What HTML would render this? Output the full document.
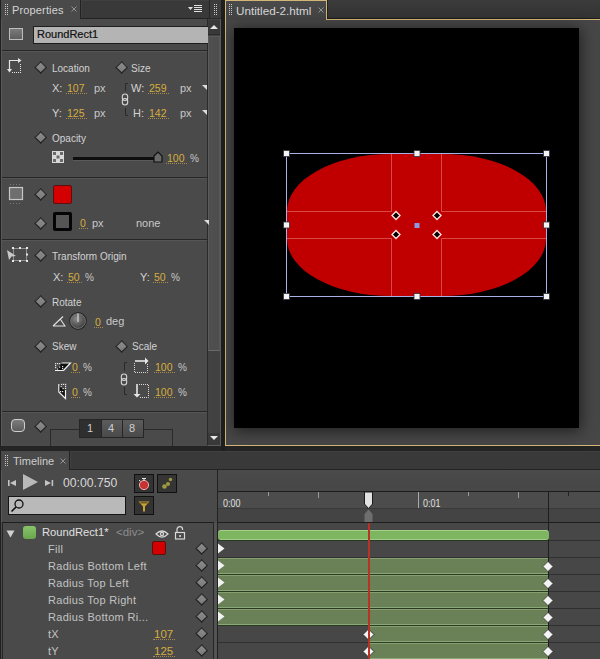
<!DOCTYPE html>
<html><head><meta charset="utf-8">
<style>
*{margin:0;padding:0;box-sizing:border-box}
html,body{width:600px;height:659px;overflow:hidden;background:#242424;font-family:"Liberation Sans",sans-serif}
.a{position:absolute}
.t{position:absolute;white-space:nowrap;color:#d2d2d2;font-size:10px;line-height:10px}
.u{position:absolute;white-space:nowrap;color:#c8c8c8;font-size:11px;line-height:10px}
.v{position:absolute;white-space:nowrap;color:#d6ad3e;font-size:10.5px;line-height:10px}
.v::after{content:"";position:absolute;left:-1px;right:-2px;bottom:-1px;border-bottom:1px dotted #a88a4a}
.dm{position:absolute;width:9.4px;height:9.4px;transform:rotate(45deg);background:linear-gradient(135deg,#8c8c8c,#7a7a7a);border:1px solid #2e2e2e;border-right-color:#1e1e1e;border-bottom-color:#1e1e1e}
.sep{position:absolute;left:2px;width:205px;height:2px;border-top:1px solid #262626;border-bottom:1px solid #555}
.tri{position:absolute;width:0;height:0;border-left:4px solid transparent;border-top:5px solid #ddd}
</style></head><body>
<!-- ================= PROPERTIES PANEL ================= -->
<div class="a" style="left:0;top:0;width:221px;height:446px;background:#4a4a4a;border-left:1px solid #202020"></div>
<div class="a" style="left:1px;top:19px;width:1px;height:427px;background:#585858"></div>
<div class="a" style="left:80px;top:0;width:129px;height:19px;background:#393939;border-left:1px solid #232323;border-bottom:1px solid #232323;box-shadow:inset 1px 1px 0 #404040"></div>
<div class="a" style="left:209px;top:0;width:12px;height:19px;background:#3c3c3c;border-left:1px solid #262626;border-bottom:1px solid #2a2a2a"></div>
<!-- grippers -->
<svg class="a" style="left:5px;top:3px" width="5" height="13"><g fill="#c8c8c8"><rect x="0" y="1" width="1" height="1"/><rect x="2" y="1" width="1" height="1"/><rect x="0" y="3" width="1" height="1"/><rect x="2" y="3" width="1" height="1"/><rect x="0" y="5" width="1" height="1"/><rect x="2" y="5" width="1" height="1"/><rect x="0" y="7" width="1" height="1"/><rect x="2" y="7" width="1" height="1"/><rect x="0" y="9" width="1" height="1"/><rect x="2" y="9" width="1" height="1"/><rect x="0" y="11" width="1" height="1"/><rect x="2" y="11" width="1" height="1"/></g></svg>
<svg class="a" style="left:214px;top:3px" width="5" height="13"><g fill="#c8c8c8"><rect x="0" y="1" width="1" height="1"/><rect x="2" y="1" width="1" height="1"/><rect x="0" y="3" width="1" height="1"/><rect x="2" y="3" width="1" height="1"/><rect x="0" y="5" width="1" height="1"/><rect x="2" y="5" width="1" height="1"/><rect x="0" y="7" width="1" height="1"/><rect x="2" y="7" width="1" height="1"/><rect x="0" y="9" width="1" height="1"/><rect x="2" y="9" width="1" height="1"/><rect x="0" y="11" width="1" height="1"/><rect x="2" y="11" width="1" height="1"/></g></svg>
<div class="t" style="left:12px;top:5px;font-size:11px;line-height:11px;color:#d4d4d4;letter-spacing:0.15px">Properties</div>
<svg class="a" style="left:71px;top:6px" width="6" height="6"><path d="M0.5 0.5L5.5 5.5M5.5 0.5L0.5 5.5" stroke="#9a9a9a" stroke-width="0.9"/></svg>
<!-- menu icon -->
<svg class="a" style="left:187px;top:3px" width="17" height="12"><path d="M1 4h5l-2.5 3z" fill="#e0e0e0"/><g fill="#e0e0e0"><rect x="7" y="2" width="8" height="1"/><rect x="7" y="4" width="8" height="1"/><rect x="7" y="6" width="8" height="1"/><rect x="7" y="8" width="8" height="1"/></g></svg>

<!-- scrollbar -->
<div class="a" style="left:207px;top:19px;width:14px;height:427px;background:#424242;border-left:1px solid #2a2a2a;border-right:1px solid #5c5c5c;border-bottom:1px solid #5c5c5c"></div>
<div class="a" style="left:208px;top:20px;width:12px;height:15px;background:#393939;border-bottom:1px solid #2c2c2c"></div>
<svg class="a" style="left:210px;top:24px" width="8" height="6"><path d="M0 5L4 1L8 5z" fill="#e6e6e6"/></svg>
<div class="a" style="left:208px;top:36px;width:12px;height:315px;background:#4f4f4f;border:1px solid #5a5a5a;border-bottom:1px solid #6a6a6a"></div>
<div class="a" style="left:208px;top:433px;width:12px;height:12px;background:#393939"></div>
<svg class="a" style="left:210px;top:435px" width="8" height="6"><path d="M0 1L8 1L4 5z" fill="#e6e6e6"/></svg>

<!-- name row -->
<div class="a" style="left:9px;top:28px;width:14px;height:12px;border:1px solid #bdbdbd;background:linear-gradient(#7a7a7a,#5e5e5e)"></div>
<div class="a" style="left:33px;top:26px;width:175px;height:18px;background:#b4b4b4;border:1px solid #1e1e1e;border-right:none"></div>
<div class="t" style="left:37px;top:29px;font-size:11px;line-height:11px;color:#101010;-webkit-text-stroke:0.2px #101010">RoundRect1</div>
<div class="sep" style="top:50px"></div>

<!-- location / size -->
<svg class="a" style="left:6px;top:57px" width="17" height="17">
 <path d="M3.5 14V3.5H14" stroke="#e4e4e4" stroke-width="1.2" fill="none"/>
 <path d="M12 1L15.5 3.5L12 6z" fill="#e4e4e4"/>
 <path d="M1 12L3.5 15.5L6 12z" fill="#e4e4e4"/>
 <g fill="#e4e4e4"><rect x="14" y="7" width="1" height="1"/><rect x="14" y="9" width="1" height="1"/><rect x="14" y="11" width="1" height="1"/><rect x="14" y="13" width="1" height="1"/><rect x="14" y="15" width="1" height="1"/><rect x="6" y="15" width="1" height="1"/><rect x="8" y="15" width="1" height="1"/><rect x="10" y="15" width="1" height="1"/><rect x="12" y="15" width="1" height="1"/></g>
</svg>
<div class="dm" style="left:36px;top:63px"></div>
<div class="t" style="left:52px;top:64px">Location</div>
<div class="dm" style="left:117px;top:63px"></div>
<div class="t" style="left:131px;top:64px">Size</div>

<div class="t" style="left:52px;top:83px;font-size:11px">X:</div>
<div class="v" style="left:67px;top:83px">107</div>
<div class="u" style="left:94px;top:83px">px</div>
<div class="t" style="left:52px;top:108px;font-size:11px">Y:</div>
<div class="v" style="left:67px;top:108px">125</div>
<div class="u" style="left:94px;top:108px">px</div>

<svg class="a" style="left:120px;top:82px" width="10" height="36">
 <path d="M5.5 9V1.5H8" stroke="#2a2a2a" stroke-width="1" fill="none"/>
 <path d="M5.5 26V33.5H8" stroke="#2a2a2a" stroke-width="1" fill="none"/>
 <rect x="2.3" y="12" width="5.4" height="6.5" rx="2.7" stroke="#d4d4d4" stroke-width="1.1" fill="none"/>
 <rect x="2.3" y="16.5" width="5.4" height="6.5" rx="2.7" stroke="#d4d4d4" stroke-width="1.1" fill="none"/>
</svg>
<div class="t" style="left:131px;top:83px;font-size:11px">W:</div>
<div class="v" style="left:149px;top:83px">259</div>
<div class="u" style="left:180px;top:83px">px</div>
<svg class="a" style="left:202px;top:85px" width="6" height="6"><path d="M0 0H5V5z" fill="#dcdcdc"/></svg>
<div class="t" style="left:133px;top:108px;font-size:11px">H:</div>
<div class="v" style="left:149px;top:108px">142</div>
<div class="u" style="left:180px;top:108px">px</div>
<svg class="a" style="left:202px;top:110px" width="6" height="6"><path d="M0 0H5V5z" fill="#dcdcdc"/></svg>

<!-- opacity -->
<div class="dm" style="left:36px;top:133px"></div>
<div class="t" style="left:52px;top:134px">Opacity</div>
<svg class="a" style="left:52px;top:151px" width="12" height="12">
 <rect x="0" y="0" width="12" height="12" fill="#d8d8d8"/>
 <g fill="#6a6a6a"><rect x="1" y="1" width="3" height="3"/><rect x="8" y="1" width="3" height="3"/><rect x="4.5" y="4.5" width="3" height="3"/><rect x="1" y="8" width="3" height="3"/><rect x="8" y="8" width="3" height="3"/></g>
</svg>
<div class="a" style="left:73px;top:157px;width:84px;height:4px;background:#0e0e0e;border-bottom:1px solid #5a5a5a"></div>
<svg class="a" style="left:153px;top:151px" width="11" height="13"><path d="M1 5L5 1L9 5V11H1z" fill="#6a6a6a" stroke="#111" stroke-width="1.2"/></svg>
<div class="v" style="left:167px;top:153px">100</div>
<div class="u" style="left:190px;top:154px;font-size:10px">%</div>
<div class="sep" style="top:177px"></div>

<!-- fill / border -->
<svg class="a" style="left:8px;top:183px" width="17" height="22">
 <rect x="1.5" y="4.5" width="13" height="12" fill="#6e6e6e" stroke="#c6c6c6" stroke-width="1.2"/>
 <path d="M2 1.5H14M2 20.5H14" stroke="#7a7a7a" stroke-width="1" stroke-dasharray="1 2"/>
</svg>
<div class="dm" style="left:36px;top:190px"></div>
<div class="a" style="left:53px;top:185px;width:19px;height:19px;background:#d40000;border:1px solid #5a1010;border-radius:2px"></div>
<div class="dm" style="left:36px;top:219px"></div>
<div class="a" style="left:53px;top:212px;width:19px;height:19px;background:#555;border:3.5px solid #050505;border-radius:2px"></div>
<div class="v" style="left:80px;top:218px">0</div>
<div class="u" style="left:92px;top:218px">px</div>
<div class="u" style="left:136px;top:218px">none</div>
<svg class="a" style="left:204px;top:220px" width="6" height="6"><path d="M0 0H5V5z" fill="#dcdcdc"/></svg>
<div class="sep" style="top:239px"></div>

<!-- transform origin -->
<svg class="a" style="left:6px;top:246px" width="23" height="18">
 <rect x="7.5" y="2.5" width="13" height="12" fill="none" stroke="#d8d8d8" stroke-width="1" stroke-dasharray="1 1"/>
 <g fill="#e8e8e8"><rect x="6" y="1" width="2" height="2"/><rect x="13" y="1" width="2" height="2"/><rect x="20" y="1" width="2" height="2"/><rect x="20" y="7.5" width="2" height="2"/><rect x="6" y="14" width="2" height="2"/><rect x="13" y="14" width="2" height="2"/><rect x="20" y="14" width="2" height="2"/></g>
 <path d="M1 4L10 10L5.5 10.5L3 14z" fill="#c8c8c8"/>
</svg>
<div class="dm" style="left:36px;top:251px"></div>
<div class="t" style="left:52px;top:252px">Transform Origin</div>
<div class="t" style="left:53px;top:272px;font-size:11px">X:</div>
<div class="v" style="left:68px;top:272px">50</div>
<div class="u" style="left:85px;top:273px;font-size:10px">%</div>
<div class="t" style="left:140px;top:272px;font-size:11px">Y:</div>
<div class="v" style="left:154px;top:272px">50</div>
<div class="u" style="left:171px;top:273px;font-size:10px">%</div>

<!-- rotate -->
<div class="dm" style="left:36px;top:297px"></div>
<div class="t" style="left:52px;top:298px">Rotate</div>
<svg class="a" style="left:52px;top:315px" width="14" height="12"><path d="M1 11H13L8.5 4.5M1 11L11 1.5" stroke="#e2e2e2" stroke-width="1.1" fill="none"/></svg>
<svg class="a" style="left:68px;top:311px" width="20" height="20">
 <defs><radialGradient id="kg" cx="40%" cy="35%" r="70%"><stop offset="0" stop-color="#8a8a8a"/><stop offset="1" stop-color="#3a3a3a"/></radialGradient></defs>
 <circle cx="10" cy="10" r="8.9" fill="#262626"/>
 <circle cx="10" cy="10" r="7.4" fill="url(#kg)" stroke="#8a8a8a" stroke-width="0.7"/>
 <path d="M10 2.5V11" stroke="#cfcfcf" stroke-width="1.3"/>
</svg>
<div class="v" style="left:95px;top:317px">0</div>
<div class="u" style="left:106px;top:316px">deg</div>

<!-- skew / scale -->
<div class="dm" style="left:36px;top:342px"></div>
<div class="t" style="left:52px;top:342px">Skew</div>
<div class="dm" style="left:117px;top:342px"></div>
<div class="t" style="left:132px;top:342px">Scale</div>
<svg class="a" style="left:52px;top:358px" width="20" height="16">
 <path d="M4 12.5L10 5H18.5L12 12.5z" fill="#101010"/>
 <path d="M3 12.5H11.5M9.5 5H18.5L11.5 12.5" stroke="#f0f0f0" stroke-width="1.2" fill="none"/>
 <g fill="#e8e8e8"><rect x="3" y="5" width="1.2" height="1.2"/><rect x="5" y="5" width="1.2" height="1.2"/><rect x="7" y="5" width="1.2" height="1.2"/><rect x="3" y="7" width="1.2" height="1.2"/><rect x="3" y="9" width="1.2" height="1.2"/><rect x="10" y="8" width="1.2" height="1.2"/><rect x="10" y="10" width="1.2" height="1.2"/><rect x="5" y="10.5" width="1.2" height="1.2"/><rect x="7" y="8.5" width="1.2" height="1.2"/></g>
</svg>
<div class="v" style="left:72px;top:362px">0</div>
<div class="u" style="left:83px;top:363px;font-size:10px">%</div>
<svg class="a" style="left:52px;top:380px" width="20" height="20">
 <path d="M6.5 4.5L13.5 10.5V18.5L6.5 12z" fill="#101010"/>
 <path d="M6.8 4V12L13.5 18.5V10" stroke="#f0f0f0" stroke-width="1.2" fill="none"/>
 <g fill="#e8e8e8"><rect x="9" y="3.8" width="1.2" height="1.2"/><rect x="11" y="3.8" width="1.2" height="1.2"/><rect x="13" y="3.8" width="1.2" height="1.2"/><rect x="13" y="5.8" width="1.2" height="1.2"/><rect x="13" y="7.8" width="1.2" height="1.2"/><rect x="8.5" y="6" width="1.2" height="1.2"/><rect x="10.5" y="8" width="1.2" height="1.2"/><rect x="8" y="11" width="1.2" height="1.2"/><rect x="10" y="11" width="1.2" height="1.2"/></g>
</svg>
<div class="v" style="left:72px;top:387px">0</div>
<div class="u" style="left:83px;top:388px;font-size:10px">%</div>

<svg class="a" style="left:119px;top:361px" width="10" height="36">
 <path d="M5.5 10V1.5H8" stroke="#2a2a2a" stroke-width="1" fill="none"/>
 <path d="M5.5 26V33.5H8" stroke="#2a2a2a" stroke-width="1" fill="none"/>
 <rect x="2.3" y="13" width="5.4" height="6.5" rx="2.7" stroke="#d4d4d4" stroke-width="1.1" fill="none"/>
 <rect x="2.3" y="17.5" width="5.4" height="6.5" rx="2.7" stroke="#d4d4d4" stroke-width="1.1" fill="none"/>
</svg>
<svg class="a" style="left:133px;top:357px" width="17" height="17">
 <path d="M2 4H13" stroke="#e6e6e6" stroke-width="1.6"/>
 <path d="M12 0.5L15.5 4L12 7.5z" fill="#e6e6e6"/>
 <path d="M1.5 6V15.5H14.5V7" stroke="#d8d8d8" stroke-width="1" stroke-dasharray="1 1" fill="none"/>
</svg>
<div class="v" style="left:155px;top:362px">100</div>
<div class="u" style="left:178px;top:363px;font-size:10px">%</div>
<svg class="a" style="left:133px;top:383px" width="17" height="16">
 <path d="M4 1V12" stroke="#e6e6e6" stroke-width="1.6"/>
 <path d="M0.5 11L4 14.5L7.5 11z" fill="#e6e6e6"/>
 <path d="M6 1.5H15.5V14.5H7" stroke="#d8d8d8" stroke-width="1" stroke-dasharray="1 1" fill="none"/>
</svg>
<div class="v" style="left:155px;top:387px">100</div>
<div class="u" style="left:178px;top:388px;font-size:10px">%</div>
<div class="sep" style="top:411px"></div>

<!-- bottom corner row -->
<div class="a" style="left:11px;top:419px;width:14px;height:13px;border:1px solid #cfcfcf;border-radius:4px;background:linear-gradient(#7c7c7c,#5c5c5c)"></div>
<div class="dm" style="left:36px;top:422px"></div>
<div class="a" style="left:50px;top:429px;width:123px;height:17px;border-left:1px solid #2a2a2a;border-top:1px solid #2a2a2a;border-right:1px solid #2a2a2a"></div>
<div class="a" style="left:79px;top:419px;width:65px;height:19px;background:#262626"></div>
<div class="a" style="left:80px;top:420px;width:21px;height:17px;background:#2f2f2f"></div>
<div class="a" style="left:102px;top:420px;width:20px;height:17px;background:linear-gradient(#5c5c5c,#4a4a4a)"></div>
<div class="a" style="left:123px;top:420px;width:20px;height:17px;background:linear-gradient(#5c5c5c,#4a4a4a)"></div>
<div class="u" style="left:87px;top:423px;color:#cfcfcf">1</div>
<div class="u" style="left:108px;top:423px;color:#cfcfcf">4</div>
<div class="u" style="left:129px;top:423px;color:#cfcfcf">8</div>

<!-- ================= DOCUMENT PANEL ================= -->
<div class="a" style="left:221px;top:0;width:4px;height:451px;background:#1f1f1f"></div>
<div class="a" style="left:225px;top:0;width:375px;height:446px;background:#474747;border-left:1px solid #d2b676;border-bottom:1px solid #d2b676"></div>
<div class="a" style="left:225px;top:0;width:102px;height:20px;border:1px solid #d2b676;border-bottom:none;background:linear-gradient(#4a4a4a,#434343)"></div>
<div class="a" style="left:327px;top:0;width:273px;height:19px;background:linear-gradient(#3b3b3b,#333);border-left:1px solid #222;border-bottom:1px solid #1a1a1a;box-shadow:0 1px 0 #d2b676,-1px 1px 0 #d2b676"></div>
<svg class="a" style="left:229px;top:3px" width="5" height="13"><g fill="#c8c8c8"><rect x="0" y="1" width="1" height="1"/><rect x="2" y="1" width="1" height="1"/><rect x="0" y="3" width="1" height="1"/><rect x="2" y="3" width="1" height="1"/><rect x="0" y="5" width="1" height="1"/><rect x="2" y="5" width="1" height="1"/><rect x="0" y="7" width="1" height="1"/><rect x="2" y="7" width="1" height="1"/><rect x="0" y="9" width="1" height="1"/><rect x="2" y="9" width="1" height="1"/><rect x="0" y="11" width="1" height="1"/><rect x="2" y="11" width="1" height="1"/></g></svg>
<div class="t" style="left:236px;top:5px;font-size:11.7px;line-height:11px;color:#d6d6d6">Untitled-2.html</div>
<svg class="a" style="left:318px;top:7px" width="6" height="6"><path d="M0.5 0.5L5.5 5.5M5.5 0.5L0.5 5.5" stroke="#9a9a9a" stroke-width="0.9"/></svg>
<div class="a" style="left:234px;top:28px;width:345px;height:400px;background:#000;box-shadow:1px 2px 14px 1px rgba(0,0,0,0.55)"></div>


<!-- stage content -->
<div class="a" style="left:287px;top:154px;width:259px;height:142px;background:#c00000;border-radius:104px 104px 104px 104px / 57px 57px 57px 57px"></div>
<svg class="a" style="left:280px;top:147px" width="275" height="156">
 <g stroke="rgba(255,170,170,0.42)" stroke-width="1" fill="none">
  <path d="M111.5 7V64.5H7M161.5 7V64.5H267M111.5 149V91.5H7M161.5 149V91.5H267"/>
 </g>
 <rect x="6.5" y="6.5" width="260" height="143" fill="none" stroke="#a8b0e8" stroke-width="1"/>
 <g fill="#f4f4f4" stroke="#303040" stroke-width="0.8">
  <rect x="3.5" y="3.5" width="6" height="6"/><rect x="134" y="3.5" width="6" height="6"/><rect x="263.5" y="3.5" width="6" height="6"/>
  <rect x="3.5" y="75" width="6" height="6"/><rect x="263.5" y="75" width="6" height="6"/>
  <rect x="3.5" y="146.5" width="6" height="6"/><rect x="134" y="146.5" width="6" height="6"/><rect x="263.5" y="146.5" width="6" height="6"/>
 </g>
 <g fill="#000" stroke="#ffe4e4" stroke-width="1.3">
  <path d="M116 64.5l4 4l-4 4l-4-4z"/><path d="M157 64.5l4 4l-4 4l-4-4z"/>
  <path d="M116 83.5l4 4l-4 4l-4-4z"/><path d="M157 83.5l4 4l-4 4l-4-4z"/>
 </g>
 <rect x="134.5" y="76" width="5" height="5" fill="#8c9ae6"/>
</svg>
<!-- ================= TIMELINE ================= -->
<div class="a" style="left:0;top:451px;width:600px;height:208px;background:#4a4a4a;border-left:1px solid #202020"></div>
<div class="a" style="left:1px;top:470px;width:1px;height:52px;background:#585858"></div>
<div class="a" style="left:69px;top:451px;width:531px;height:19px;background:#393939;border-left:1px solid #232323;border-bottom:1px solid #232323;box-shadow:inset 1px 1px 0 #404040"></div>
<svg class="a" style="left:5px;top:454px" width="5" height="13"><g fill="#c8c8c8"><rect x="0" y="1" width="1" height="1"/><rect x="2" y="1" width="1" height="1"/><rect x="0" y="3" width="1" height="1"/><rect x="2" y="3" width="1" height="1"/><rect x="0" y="5" width="1" height="1"/><rect x="2" y="5" width="1" height="1"/><rect x="0" y="7" width="1" height="1"/><rect x="2" y="7" width="1" height="1"/><rect x="0" y="9" width="1" height="1"/><rect x="2" y="9" width="1" height="1"/><rect x="0" y="11" width="1" height="1"/><rect x="2" y="11" width="1" height="1"/></g></svg>
<div class="t" style="left:13px;top:456px;font-size:11px;line-height:11px;color:#cdcdcd">Timeline</div>
<svg class="a" style="left:60px;top:458px" width="6" height="6"><path d="M0.5 0.5L5.5 5.5M5.5 0.5L0.5 5.5" stroke="#9a9a9a" stroke-width="0.9"/></svg>

<!-- controls -->
<svg class="a" style="left:7px;top:473px" width="48" height="19">
 <rect x="1" y="7" width="1.6" height="6" fill="#c4c4c4"/><path d="M3 10L9 7V13z" fill="#c4c4c4"/>
 <path d="M16 1V17L31 9z" fill="#b9b9b9"/>
 <path d="M38 7V13L44 10z" fill="#c4c4c4"/><rect x="44.6" y="7" width="1.6" height="6" fill="#c4c4c4"/>
</svg>
<div class="t" style="left:63px;top:478px;font-size:12.2px;line-height:11px;color:#d8d8d8">00:00.750</div>
<div class="a" style="left:8px;top:496px;width:118px;height:19px;background:#b9b9b9;border:1px solid #151515"></div>
<svg class="a" style="left:10px;top:498px" width="16" height="16"><circle cx="9" cy="6" r="4" stroke="#111" stroke-width="1.3" fill="none"/><path d="M6 9L1.5 13.5" stroke="#111" stroke-width="1.6"/></svg>
<div class="a" style="left:134px;top:474px;width:20px;height:19px;background:#333;border:1px solid #111"></div>
<svg class="a" style="left:136px;top:476px" width="16" height="16"><circle cx="8" cy="9" r="4.6" fill="#c83232" stroke="#e8b0b0" stroke-width="1"/><path d="M6 2.5H10M8 2.5V4.5" stroke="#eee" stroke-width="1"/><path d="M3 4L4.5 5.5" stroke="#eee" stroke-width="1"/></svg>
<div class="a" style="left:157px;top:474px;width:20px;height:19px;background:#353535;border:1px solid #111"></div>
<svg class="a" style="left:159px;top:476px" width="16" height="16"><g fill="#9e9a3c"><circle cx="5.5" cy="10.5" r="2.3"/><circle cx="9" cy="8" r="2"/><circle cx="11.5" cy="3.5" r="1.7"/></g></svg>
<div class="a" style="left:134px;top:496px;width:20px;height:19px;background:#333;border:1px solid #111"></div>
<svg class="a" style="left:136px;top:499px" width="16" height="15"><path d="M2.5 2.5H13.5L9 7.5V12.5H7V7.5z" fill="#c9a232"/><path d="M4.5 3.8H11.5" stroke="#5a4a20" stroke-width="1.2"/></svg>

<!-- layers box -->
<div class="a" style="left:2px;top:522px;width:212px;height:137px;background:#4a4a4a;border-left:1px solid #262626;border-top:1px solid #1e1e1e;border-right:1px solid #262626"></div>
<div class="a" style="left:214px;top:523px;width:3px;height:136px;background:#535353"></div>
<div class="a" style="left:217px;top:470px;width:1px;height:189px;background:#222"></div>
<svg class="a" style="left:6px;top:530px" width="9" height="8"><path d="M0.5 0.5H8.5L4.5 7.5z" fill="#d0d0d0"/></svg>
<div class="a" style="left:23px;top:526px;width:13px;height:13px;background:linear-gradient(#86c46a,#6aa64e);border-radius:3px"></div>
<div class="t" style="left:42px;top:527px;font-size:11.2px;line-height:11px;color:#e0e0e0">RoundRect1*</div>
<div class="t" style="left:116px;top:527px;font-size:11.5px;line-height:11px;color:#8c8c8c">&lt;div&gt;</div>
<svg class="a" style="left:155px;top:529px" width="14" height="10"><path d="M1 5Q7 -1 13 5Q7 11 1 5z" fill="none" stroke="#d8d8d8" stroke-width="1.2"/><circle cx="7" cy="5" r="2.2" fill="#d8d8d8"/><circle cx="7" cy="5" r="0.9" fill="#4a4a4a"/></svg>
<svg class="a" style="left:174px;top:526px" width="12" height="14"><path d="M3 6V3.5A2.8 2.8 0 0 1 8.6 3.5V4" fill="none" stroke="#d8d8d8" stroke-width="1.2"/><rect x="1.5" y="6.5" width="9" height="6.5" fill="none" stroke="#d8d8d8" stroke-width="1.2"/><rect x="5.3" y="9" width="1.6" height="2" fill="#d8d8d8"/></svg>

<div class="t" style="left:48px;top:544px;font-size:11px;line-height:11px;color:#c2c2c2;letter-spacing:0.3px">Fill</div>
<div class="a" style="left:152px;top:541px;width:14px;height:14px;background:#d40000;border:1px solid #5a1010;border-radius:2px"></div>
<div class="t" style="left:48px;top:561px;font-size:11px;line-height:11px;color:#c2c2c2;letter-spacing:0.3px">Radius Bottom Left</div>
<div class="t" style="left:48px;top:578px;font-size:11px;line-height:11px;color:#c2c2c2;letter-spacing:0.3px">Radius Top Left</div>
<div class="t" style="left:48px;top:595px;font-size:11px;line-height:11px;color:#c2c2c2;letter-spacing:0.3px">Radius Top Right</div>
<div class="t" style="left:48px;top:612px;font-size:11px;line-height:11px;color:#c2c2c2;letter-spacing:0.3px">Radius Bottom Ri...</div>
<div class="t" style="left:48px;top:629px;font-size:11px;line-height:11px;color:#c2c2c2;letter-spacing:0.3px">tX</div>
<div class="t" style="left:48px;top:646px;font-size:11px;line-height:11px;color:#c2c2c2;letter-spacing:0.3px">tY</div>
<div class="v" style="left:154px;top:629px;font-size:11.5px">107</div>
<div class="v" style="left:154px;top:646px;font-size:11.5px">125</div>
<div class="dm" style="left:197px;top:544px"></div>
<div class="dm" style="left:197px;top:561px"></div>
<div class="dm" style="left:197px;top:578px"></div>
<div class="dm" style="left:197px;top:595px"></div>
<div class="dm" style="left:197px;top:612px"></div>
<div class="dm" style="left:197px;top:629px"></div>
<div class="dm" style="left:197px;top:646px"></div>

<!-- ruler -->
<div class="a" style="left:218px;top:470px;width:382px;height:21px;background:linear-gradient(#4a4a4a,#474747)"></div>
<div class="a" style="left:218px;top:491px;width:382px;height:1px;background:#1e1e1e"></div>
<div class="a" style="left:218px;top:492px;width:382px;height:17px;background:#4c4c4c"></div>
<div class="a" style="left:218px;top:508px;width:382px;height:1px;background:#3a3a3a"></div>
<div class="a" style="left:218px;top:509px;width:382px;height:13px;background:#444"></div>
<div class="a" style="left:218px;top:522px;width:382px;height:1px;background:#1e1e1e"></div>
<div class="a" style="left:418px;top:492px;width:1px;height:16px;background:#aaa"></div>
<div class="a" style="left:268px;top:492px;width:1px;height:4px;background:#999"></div>
<div class="a" style="left:318px;top:492px;width:1px;height:6px;background:#999"></div>
<div class="a" style="left:468px;top:492px;width:1px;height:4px;background:#999"></div>
<div class="a" style="left:518px;top:492px;width:1px;height:6px;background:#999"></div>
<div class="a" style="left:568px;top:492px;width:1px;height:4px;background:#222"></div>
<div class="t" style="left:223px;top:498px;font-size:10.5px;line-height:10px;color:#e0e0e0;transform:scaleX(0.85);transform-origin:0 0">0:00</div>
<div class="t" style="left:423px;top:498px;font-size:10.5px;line-height:10px;color:#e0e0e0;transform:scaleX(0.85);transform-origin:0 0">0:01</div>

<!-- tracks -->
<div class="a" style="left:218px;top:523px;width:382px;height:136px;background:#474747"></div>
<div class="a" style="left:218px;top:540px;width:382px;height:1px;background:#303030"></div>
<div class="a" style="left:218px;top:557px;width:382px;height:1px;background:#303030"></div>
<div class="a" style="left:218px;top:574px;width:382px;height:1px;background:#303030"></div>
<div class="a" style="left:218px;top:591px;width:382px;height:1px;background:#303030"></div>
<div class="a" style="left:218px;top:608px;width:382px;height:1px;background:#303030"></div>
<div class="a" style="left:218px;top:625px;width:382px;height:1px;background:#303030"></div>
<div class="a" style="left:218px;top:642px;width:382px;height:1px;background:#303030"></div>
<div class="a" style="left:548px;top:491px;width:1px;height:168px;background:#1e1e1e"></div>
<div class="a" style="left:218px;top:530px;width:331px;height:10px;background:#7eb560;border-top:1px solid #a4d08a;border-bottom:1px solid #a0cc88;border-radius:3px;box-shadow:0 1px 0 #283820"></div>
<div class="a" style="left:218px;top:558px;width:330px;height:16px;background:#6a8157;border-top:1px solid #86a070;border-bottom:1px solid #88a878;box-shadow:0 1px 0 #2c3a24"></div>
<div class="a" style="left:218px;top:575px;width:330px;height:16px;background:#6a8157;border-top:1px solid #86a070;border-bottom:1px solid #88a878;box-shadow:0 1px 0 #2c3a24"></div>
<div class="a" style="left:218px;top:592px;width:330px;height:16px;background:#6a8157;border-top:1px solid #86a070;border-bottom:1px solid #88a878;box-shadow:0 1px 0 #2c3a24"></div>
<div class="a" style="left:218px;top:609px;width:330px;height:16px;background:#6a8157;border-top:1px solid #86a070;border-bottom:1px solid #88a878;box-shadow:0 1px 0 #2c3a24"></div>
<div class="a" style="left:369px;top:626px;width:179px;height:16px;background:#6a8157;border-top:1px solid #86a070;border-bottom:1px solid #88a878;box-shadow:0 1px 0 #2c3a24"></div>
<div class="a" style="left:369px;top:643px;width:179px;height:16px;background:#6a8157;border-top:1px solid #86a070;border-bottom:1px solid #88a878;box-shadow:0 1px 0 #2c3a24"></div>
<svg class="a" style="left:218px;top:540px" width="8" height="119"><g fill="#f2f2f2"><path d="M0 3.5L6.5 8.5L0 13.5z"/><path d="M0 20.5L6.5 25.5L0 30.5z"/><path d="M0 37.5L6.5 42.5L0 47.5z"/><path d="M0 54.5L6.5 59.5L0 64.5z"/><path d="M0 71.5L6.5 76.5L0 81.5z"/></g></svg>
<svg class="a" style="left:540px;top:558px" width="16" height="102"><g fill="#f4f4f4" stroke="#1a1a1a" stroke-width="0.6"><path d="M8 3.5l5 5l-5 5l-5-5z"/><path d="M8 20.5l5 5l-5 5l-5-5z"/><path d="M8 37.5l5 5l-5 5l-5-5z"/><path d="M8 54.5l5 5l-5 5l-5-5z"/><path d="M8 71.5l5 5l-5 5l-5-5z"/><path d="M8 88.5l5 5l-5 5l-5-5z"/></g></svg>
<!-- playhead -->
<svg class="a" style="left:363px;top:491px" width="11" height="32">
 <path d="M1.5 1V13L5.5 17.5L9.5 13V1z" fill="#e2e2e2" stroke="#1a1a1a" stroke-width="1"/>
 <path d="M5.5 18.5L9.5 23V31H1.5V23z" fill="#6e6e6e"/>
</svg>
<svg class="a" style="left:360px;top:626px" width="16" height="34"><g fill="#f4f4f4" stroke="#1a1a1a" stroke-width="0.8"><path d="M8.5 3l5.5 5.5l-5.5 5.5l-5.5-5.5z"/><path d="M8.5 20l5.5 5.5l-5.5 5.5l-5.5-5.5z"/></g></svg>
<div class="a" style="left:367.5px;top:523px;width:2px;height:136px;background:#b83226"></div>
</body></html>
